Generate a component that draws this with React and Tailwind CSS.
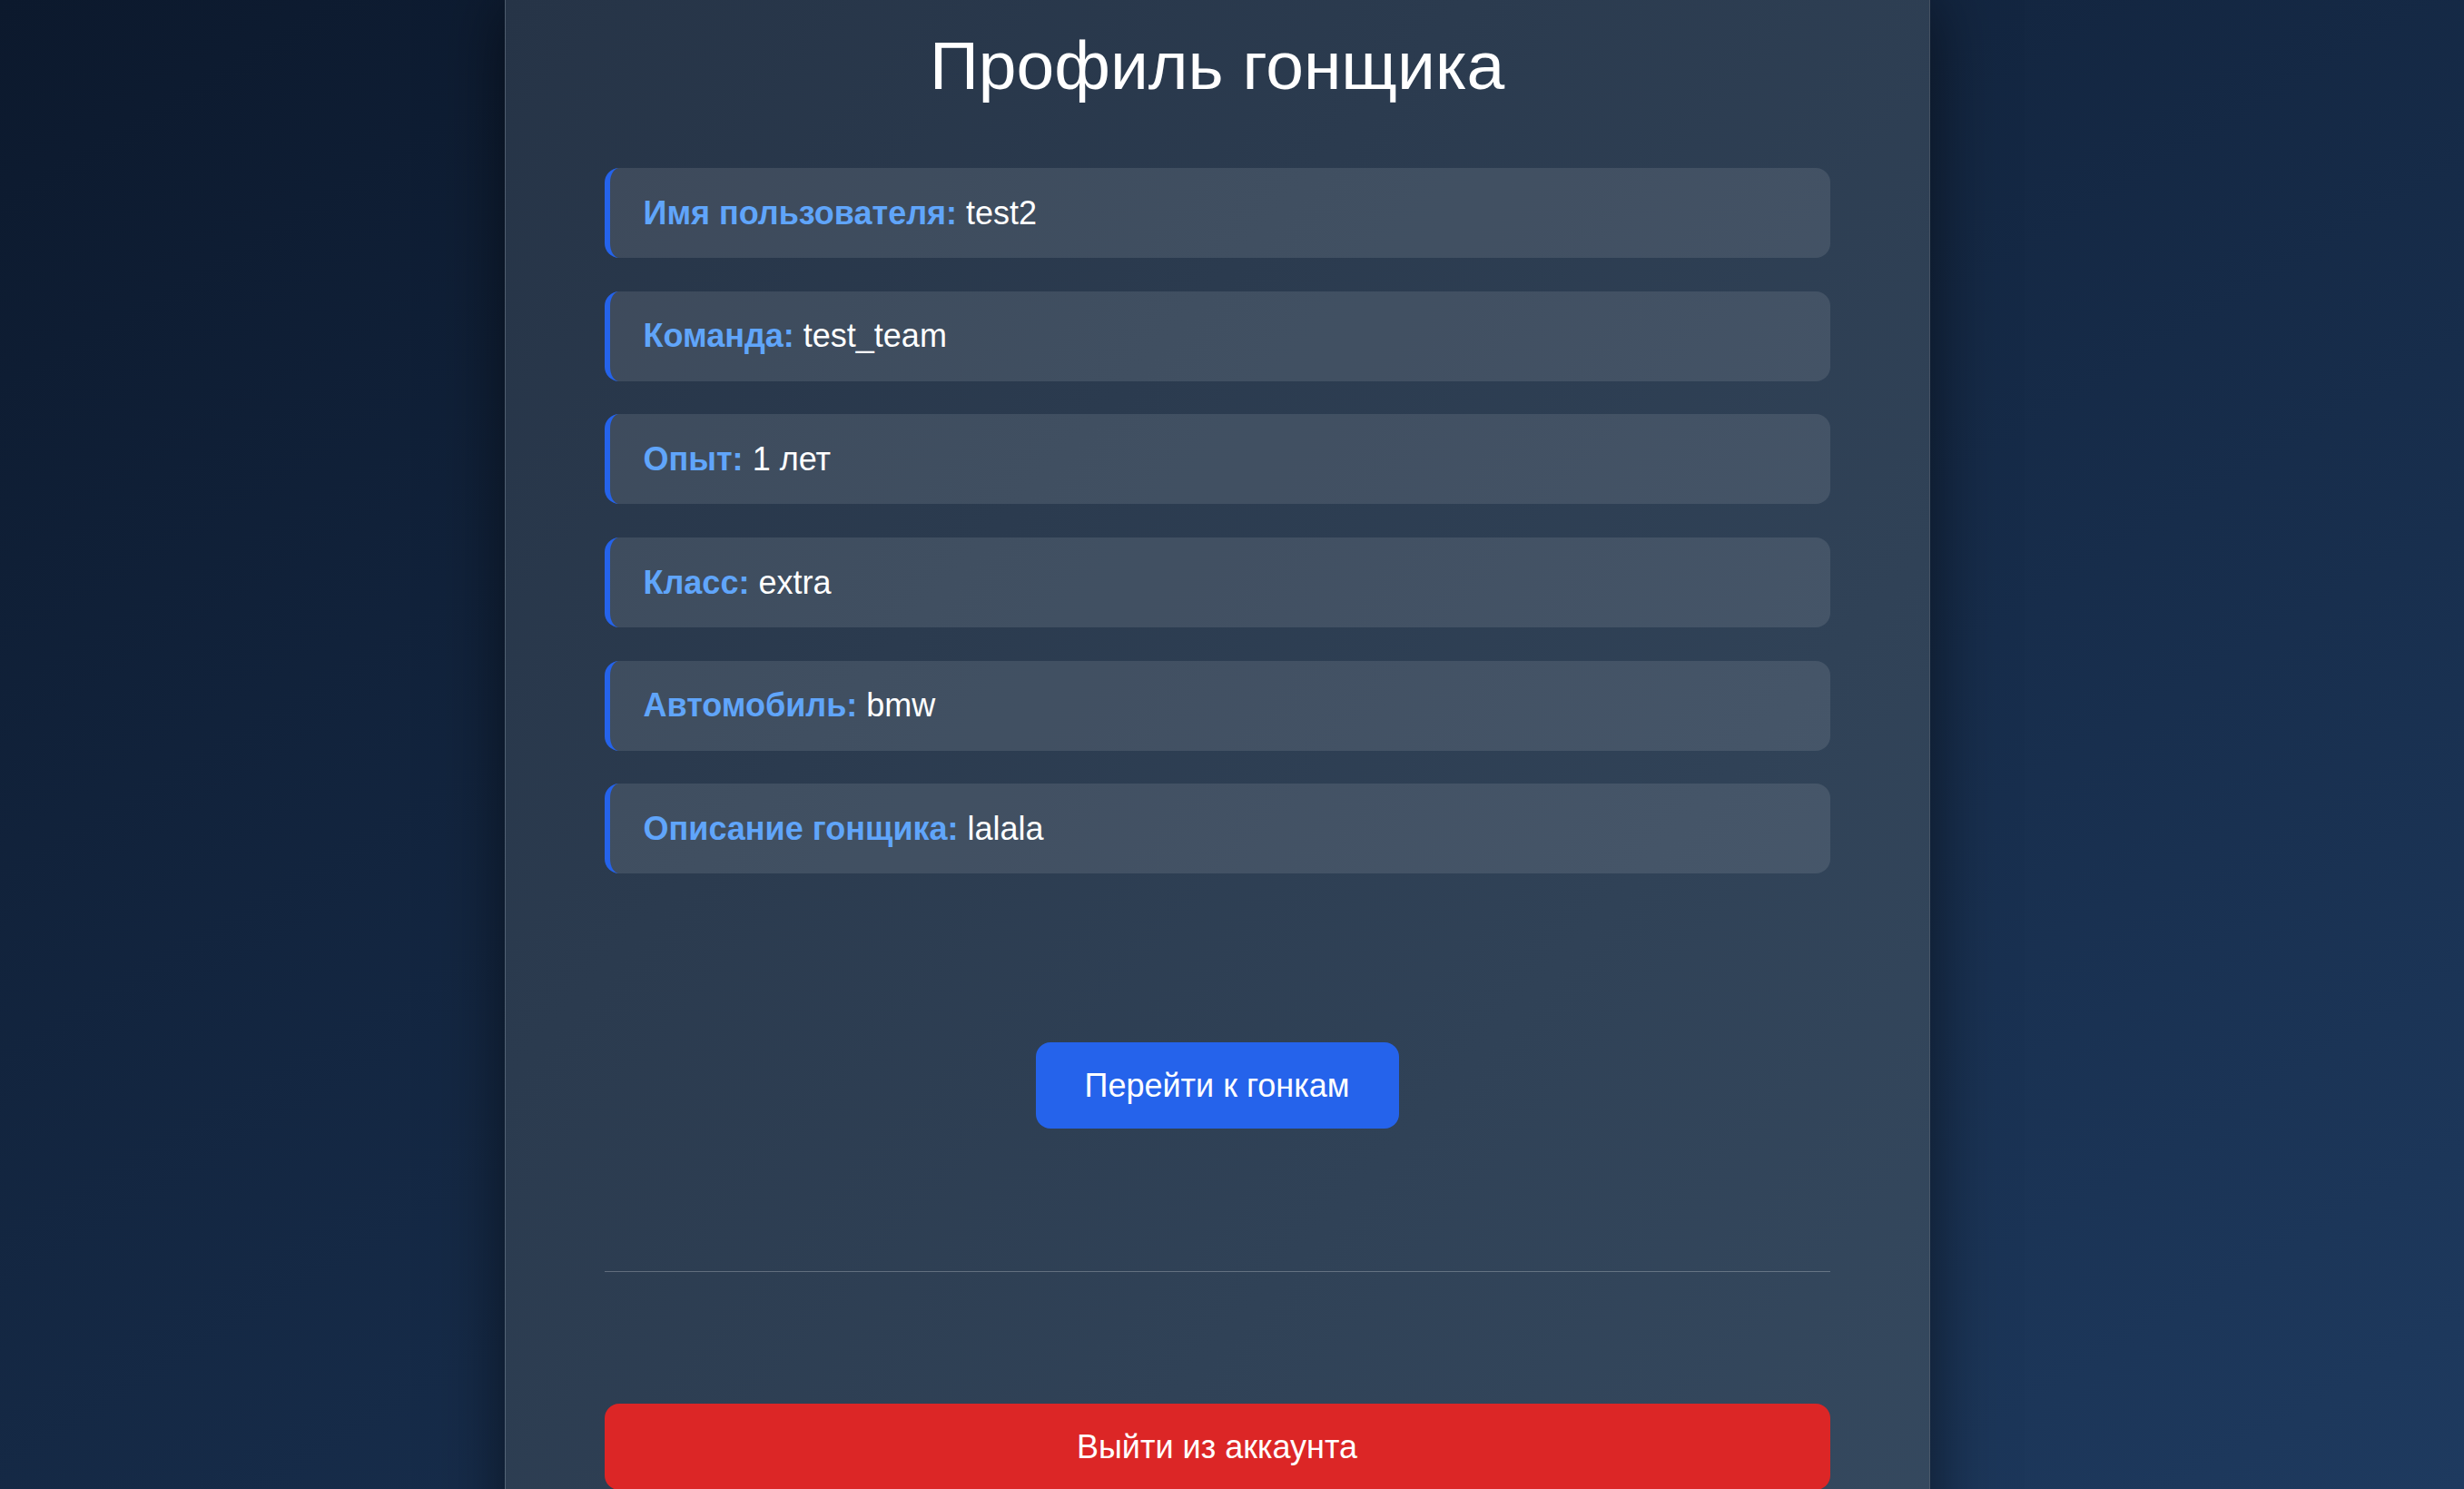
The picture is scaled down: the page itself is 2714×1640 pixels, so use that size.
export default function App() {
  const rows = [
    ["Имя пользователя:", "test2"],
    ["Команда:", "test_team"],
    ["Опыт:", "1 лет"],
    ["Класс:", "extra"],
    ["Автомобиль:", "bmw"],
    ["Описание гонщика:", "lalala"],
  ];
  return (
    <div
      className="h-[1640px] w-full overflow-hidden bg-linear-to-br from-[#0c192d] to-[#1e3a5f] flex items-start justify-center pr-[33px]"
      style={{ fontFamily: '"Liberation Sans", Arial, sans-serif' }}
    >
      <div className="w-[1570px] min-h-[1760px] shrink-0 border-x border-white/15 bg-linear-to-br from-[#263447] to-[#35495f] shadow-[0_0_70px_rgba(0,0,0,0.55)] px-[109px] flex flex-col">
        <h1 className="shrink-0 mt-[35px] text-center text-[75px] leading-[74px] font-normal text-white">
          Профиль гонщика
        </h1>
        <div className="shrink-0 mt-[76px] flex flex-col gap-[36.7px]">
          {rows.map(([label, value]) => (
            <div
              key={label}
              className="shrink-0 h-[99px] flex items-center rounded-[16px] border-l-[6px] border-[#2563eb] bg-white/10 pl-[37px] text-[36px] text-white"
            >
              <span className="font-bold text-[#60a5fa]">{label}</span>
              <span className="whitespace-pre"> {value}</span>
            </div>
          ))}
        </div>
        <div className="shrink-0 mt-[186px] flex justify-center">
          <button className="h-[95px] w-[400px] rounded-[16px] bg-[#2563eb] text-[36px] text-white">
            Перейти к гонкам
          </button>
        </div>
        <div className="shrink-0 mt-[157px] h-px bg-white/25" />
        <button className="shrink-0 mt-[145px] h-[95px] w-full rounded-[16px] bg-[#dc2626] text-[36px] text-white">
          Выйти из аккаунта
        </button>
      </div>
    </div>
  );
}
